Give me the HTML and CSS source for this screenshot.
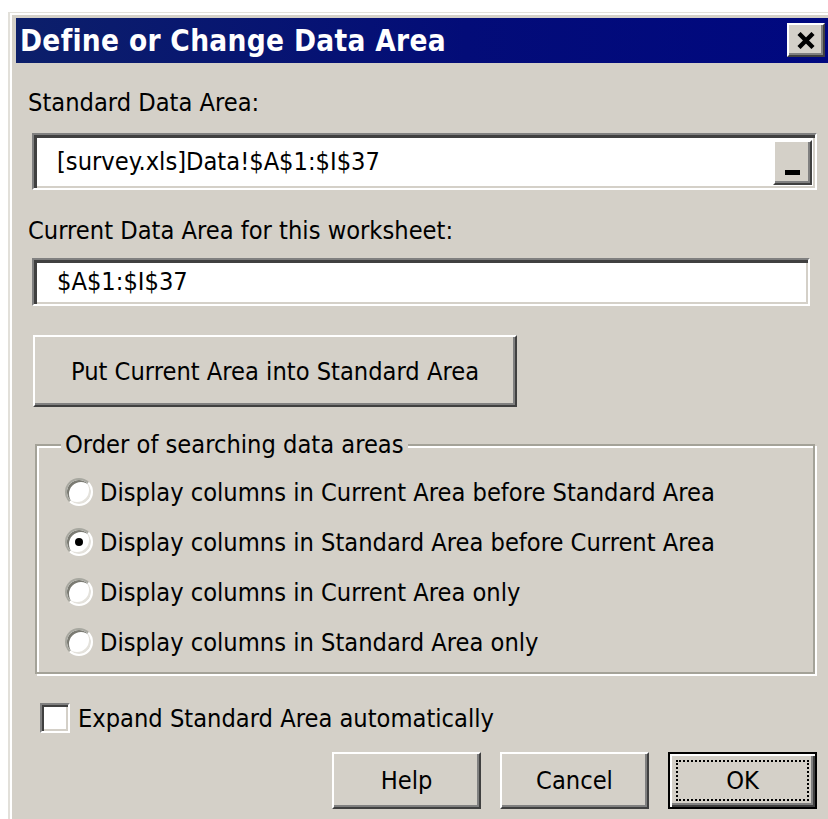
FILE: index.html
```html
<!DOCTYPE html>
<html>
<head>
<meta charset="utf-8">
<title>Define or Change Data Area</title>
<link rel="stylesheet" href="styles.css">
</head>
<body>
<div class="window">
  <div class="titlebar">
    <span class="title">Define or Change Data Area</span>
    <button class="close" aria-label="Close">
      <svg width="18" height="17" viewBox="0 0 18 17"><path d="M2 1.5 L16 15.5 M16 1.5 L2 15.5" stroke="#000" stroke-width="4.4" fill="none"/></svg>
    </button>
  </div>
  <div class="content">
    <label class="label first">Standard Data Area:</label>
    <div class="field refedit">
      <span class="value">[survey.xls]Data!$A$1:$I$37</span>
      <span class="collapse"><i class="bar"></i></span>
    </div>
    <label class="label second">Current Data Area for this worksheet:</label>
    <div class="field current">
      <span class="value">$A$1:$I$37</span>
    </div>
    <button class="btn put">Put Current Area into Standard Area</button>
    <fieldset class="group">
      <legend>Order of searching data areas</legend>
      <div class="radio"><span class="circle"></span>Display columns in Current Area before Standard Area</div>
      <div class="radio"><span class="circle checked"></span>Display columns in Standard Area before Current Area</div>
      <div class="radio"><span class="circle"></span>Display columns in Current Area only</div>
      <div class="radio"><span class="circle"></span>Display columns in Standard Area only</div>
    </fieldset>
    <div class="check"><span class="box"></span>Expand Standard Area automatically</div>
    <div class="actions">
      <button class="btn action">Help</button>
      <button class="btn action">Cancel</button>
      <button class="btn action ok"><span class="focus">OK</span></button>
    </div>
  </div>
</div>
</body>
</html>
```
FILE: styles.css
```css
* { box-sizing: border-box; }

html, body {
  margin: 0;
  background: #fff;
  overflow: hidden;
}

body {
  width: 828px;
  height: 819px;
  font-family: "DejaVu Sans Condensed", "DejaVu Sans", sans-serif;
  font-size: 25.2px;
  color: #000;
}

/* window frame */
.window {
  margin: 12px 0 0 8px;
  width: 834px;
  height: 830px;
  background: #d4d0c8;
  box-shadow: inset 2px 1px 0 #e2e0da, inset 4px 3px 0 #fff;
  padding: 6px 8px 0 8px;
}

.titlebar {
  height: 45px;
  display: flex;
  align-items: center;
  justify-content: space-between;
  padding: 0 9px 0 4px;
  background: linear-gradient(to right, #0c1f6a, #030c78 55%, #000880);
}

.title {
  color: #fff;
  font-weight: bold;
  font-size: 29.5px;
  line-height: 32px;
  letter-spacing: 0.3px;
}

.close {
  width: 38px;
  height: 34px;
  margin-top: -1px;
  padding: 0;
  display: flex;
  align-items: center;
  justify-content: center;
  background: #d4d0c8;
  border: 2px solid;
  border-color: #fff #404040 #404040 #fff;
  box-shadow: inset -2px -2px 0 #808080;
}

.content {
  display: flex;
  flex-direction: column;
  align-items: flex-start;
  padding: 0 17px 0 12px;
}

.label {
  line-height: 30px;
  height: 30px;
}
.label.first { margin-top: 25px; }
.label.second { margin-top: 26px; }

/* sunken edit fields */
.field {
  align-self: stretch;
  display: flex;
  align-items: center;
  background: #fff;
  border: 2px solid;
  border-color: #808080 #fff #fff #808080;
  box-shadow: inset 3px 3px 0 #404040, inset -2px -2px 0 #d4d0c8;
  padding-left: 23px;
  margin-left: 4px;
}

.field.refedit {
  margin-top: 15px;
  height: 57px;
}

.field.current {
  margin-top: 12px;
  height: 48px;
  margin-right: 7px;
}

.value { line-height: 30px; }

.collapse {
  margin: 5px 3px 3px auto;
  align-self: stretch;
  width: 39px;
  background: #d4d0c8;
  border: 2px solid;
  border-color: #fff #404040 #404040 #fff;
  box-shadow: inset -2px -2px 0 #808080;
  display: flex;
  justify-content: center;
  align-items: flex-end;
  padding-bottom: 8px;
}
.bar {
  display: block;
  width: 15px;
  height: 5px;
  background: #000;
}

/* raised push buttons */
.btn {
  font: inherit;
  color: #000;
  background: #d4d0c8;
  border: 2px solid;
  border-color: #fff #404040 #404040 #fff;
  box-shadow: inset -2px -2px 0 #808080;
  padding: 0;
}

.btn.put {
  margin: 29px 0 0 5px;
  width: 484px;
  height: 72px;
}

/* group box */
.group {
  align-self: stretch;
  margin: 23px 2px 0 7px;
  padding: 7px 0 5px 28px;
  border: 2px solid #a4a298;
  box-shadow: inset 2px 2px 0 #fff, 2px 2px 0 #fff;
}

.group legend {
  padding: 0 4px;
  margin-left: -4px;
  line-height: 30px;
  background: #d4d0c8;
}

.radio {
  height: 50px;
  display: flex;
  align-items: center;
  gap: 7px;
}

.circle {
  position: relative;
  width: 28px;
  height: 28px;
  border-radius: 50%;
  background: #fff;
  border: 2px solid;
  border-color: #a8a8a0 #fff #fff #a8a8a0;
  box-shadow: inset 2px 2px 0 #7a7a72, inset -2px -2px 0 #e4e2dc;
}

.circle.checked::after {
  content: "";
  position: absolute;
  left: 8px;
  top: 8px;
  width: 8px;
  height: 8px;
  border-radius: 50%;
  background: #000;
}

/* checkbox */
.check {
  margin: 29px 0 0 12px;
  height: 30px;
  display: flex;
  align-items: center;
  gap: 8px;
}

.box {
  width: 30px;
  height: 30px;
  background: #fff;
  border: 2px solid;
  border-color: #808080 #fff #fff #808080;
  box-shadow: inset 2px 2px 0 #404040, inset -2px -2px 0 #d4d0c8;
}

/* dialog buttons */
.actions {
  align-self: stretch;
  margin-top: 19px;
  display: flex;
  justify-content: flex-end;
  gap: 19px;
}

.btn.action {
  width: 149px;
  height: 57px;
}

.btn.ok {
  border: 2px solid #000;
  box-shadow: inset 2px 2px 0 #fff, inset -2px -2px 0 #404040, inset -4px -4px 0 #808080;
  display: flex;
  padding: 6px;
}

.focus {
  flex: 1;
  display: flex;
  align-items: center;
  justify-content: center;
  border: 2px dotted #000;
}
```
